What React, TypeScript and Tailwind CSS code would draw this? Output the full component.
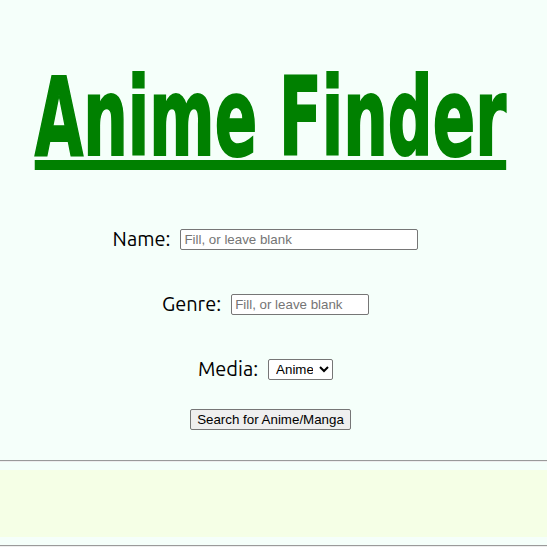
import React from "react";

const labelCls = "font-['Ubuntu','Noto_Sans','DejaVu_Sans',sans-serif] text-[20px] text-black";
const fieldCls =
  "font-['Liberation_Sans',Arial,sans-serif] text-[13.33px] text-black bg-white border border-[#767676] rounded-[2px] px-[3px] h-[21px] placeholder:text-[#757575] outline-none";

const App = () => {
  return (
    <div className="min-h-[547px] w-full bg-[#f5fffa] overflow-hidden">
      {/* Title */}
      <div className="flex justify-center pt-[64px] pr-[6px] h-[178px]">
        <h1 className="inline-block scale-x-[0.645] font-['DejaVu_Sans_Condensed',sans-serif] font-bold text-[108px] leading-none text-[#008000] [-webkit-text-stroke:2px_#008000] underline decoration-[10px] underline-offset-[5px] whitespace-nowrap">
          Anime Finder
        </h1>
      </div>

      {/* Form */}
      <div className="flex flex-col items-center mt-[50px] pr-[16px]">
        <div className="flex items-center gap-[10px] h-[22px]">
          <label className={labelCls}>Name:</label>
          <input type="text" placeholder="Fill, or leave blank" className={`${fieldCls} w-[238px]`} />
        </div>
        <div className="flex items-center gap-[10px] h-[22px] mt-[43px]">
          <label className={labelCls}>Genre:</label>
          <input type="text" placeholder="Fill, or leave blank" className={`${fieldCls} w-[138px]`} />
        </div>
        <div className="flex items-center gap-[10px] h-[22px] mt-[43px]">
          <label className={labelCls}>Media:</label>
          <select className={`${fieldCls} w-[65px] h-[19px] px-0`}>
            <option>Anime</option>
            <option>Manga</option>
          </select>
        </div>
      </div>
      <div className="flex justify-center mt-[29px] pr-[6px]">
        <button className="font-['Liberation_Sans',Arial,sans-serif] text-[13.33px] text-black bg-[#efefef] border border-[#767676] rounded-[2px] px-[6px] h-[21px]">
          Search for Anime/Manga
        </button>
      </div>

      {/* Footer */}
      <hr className="mt-[30px] border-t border-[#9a9a9a] border-b-[#eeeeee] border-b" />
      <div className="mt-[8px] h-[67px] bg-[#f5ffe6]" />
      <hr className="mt-[8px] border-t border-[#9a9a9a] border-b-[#eeeeee] border-b" />
    </div>
  );
};

export default App;
